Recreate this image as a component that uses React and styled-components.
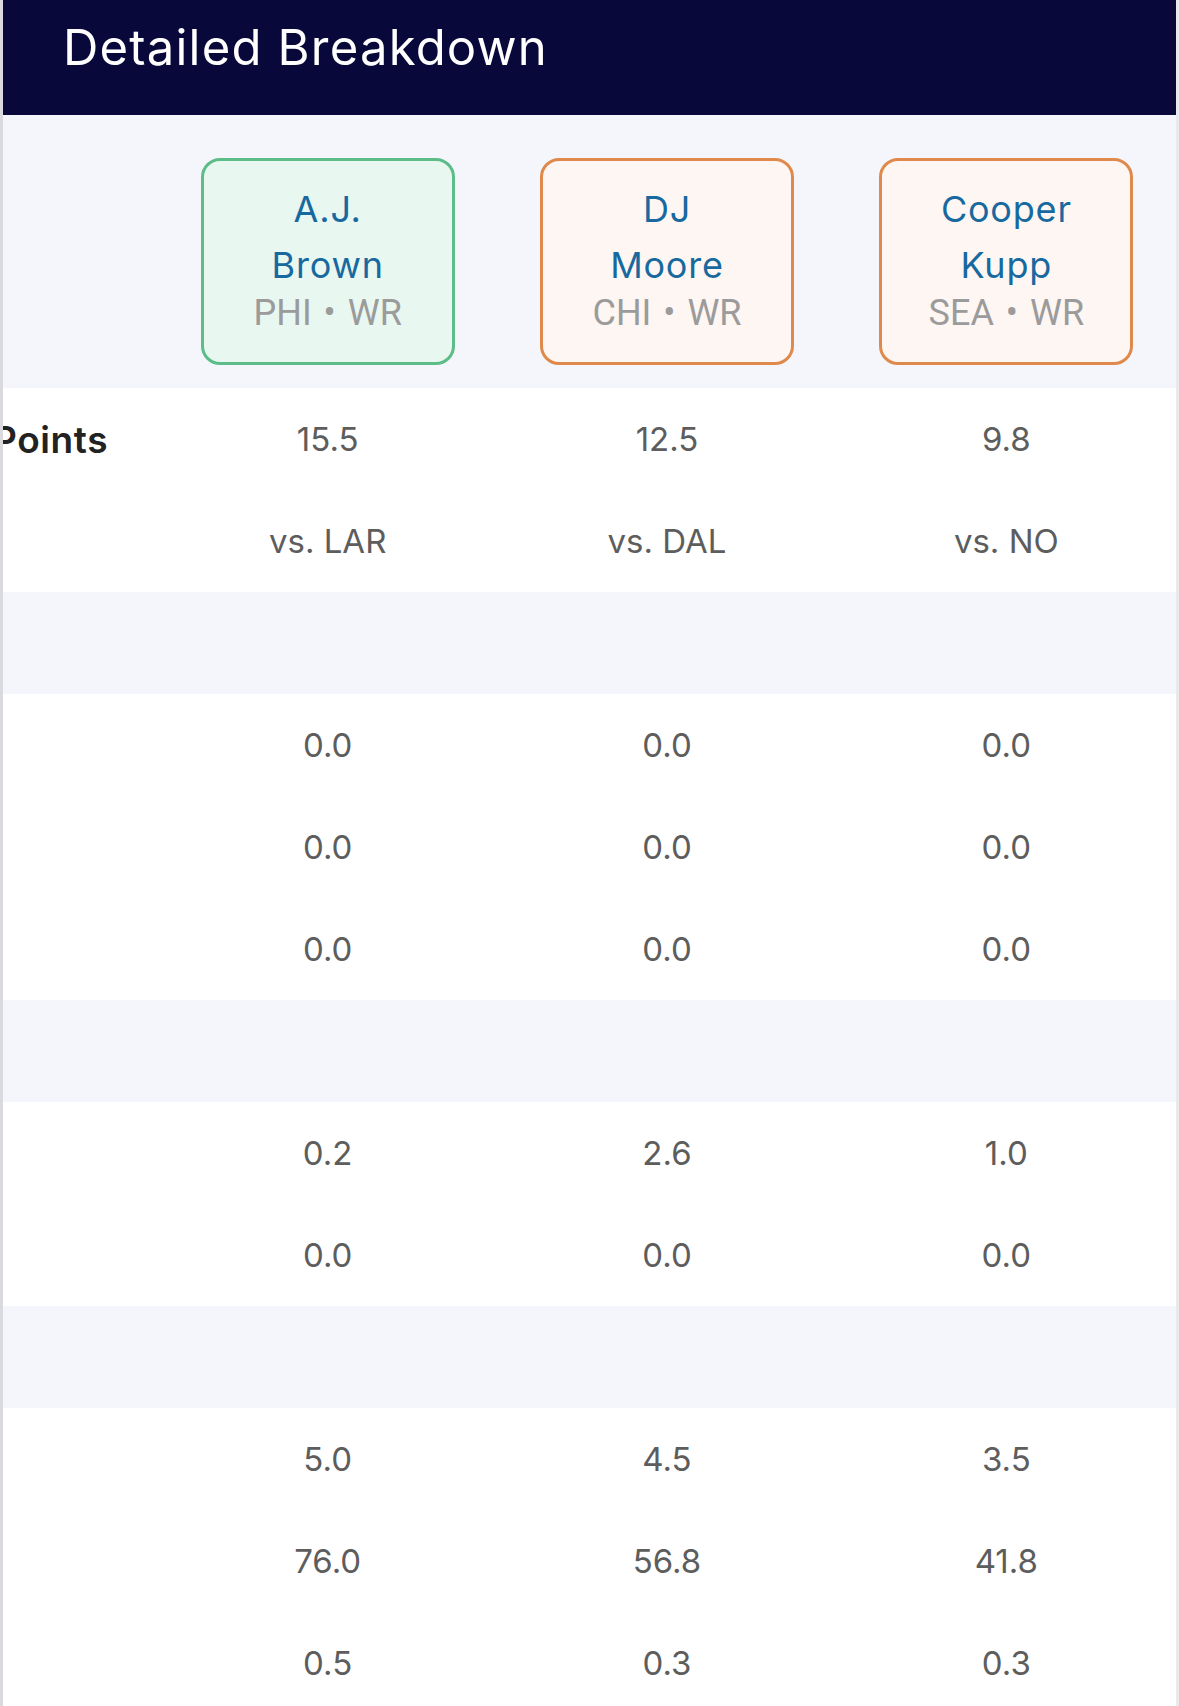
import React from "react";
import styled, { createGlobalStyle } from "styled-components";

const GlobalStyle = createGlobalStyle`
  * {
    box-sizing: border-box;
  }
  body {
    margin: 0;
    background: #ffffff;
    font-family: "Inter", "Noto Sans", sans-serif;
  }
`;

const Page = styled.div`
  width: 1179px;
  min-height: 1706px;
  border-left: 3px solid #d9d9de;
  border-right: 3px solid #e9e9ee;
  background: #ffffff;
  overflow: hidden;
  box-shadow: inset 12px 0 10px -10px rgba(0, 0, 0, 0.08);
`;

const Header = styled.div`
  height: 115px;
  background: #08093a;
  display: flex;
  align-items: center;
  padding: 0 0 20px 60px;
`;

const Title = styled.h1`
  margin: 0;
  color: #ffffff;
  font-size: 49px;
  font-weight: 400;
  letter-spacing: 1.2px;
`;

const Grid = styled.div`
  display: grid;
  grid-template-columns: 155px repeat(3, 1fr);
  align-items: center;
  background: ${(p) => (p.$shade ? "#f5f6fb" : "#ffffff")};
  height: ${(p) => p.$height || 102}px;
`;

const CardCell = styled.div`
  display: flex;
  justify-content: center;
  align-self: start;
  padding-top: 43px;
`;

const Card = styled.div`
  width: 254px;
  height: 207px;
  border-radius: 19px;
  border: 3px solid ${(p) => (p.$best ? "#5cbd88" : "#df8a4c")};
  background: ${(p) => (p.$best ? "#e8f7f0" : "#fef6f2")};
  display: flex;
  flex-direction: column;
  align-items: center;
  padding-top: 20px;
`;

const Name = styled.div`
  color: #17699f;
  font-size: 36px;
  letter-spacing: 0.8px;
  line-height: 56px;
  text-align: center;
`;

const Team = styled.div`
  color: #9b9b9b;
  font-family: "Roboto", sans-serif;
  font-size: 36px;
  line-height: 40px;
  word-spacing: 3px;
`;

const Label = styled.div`
  margin-left: -10px;
  font-size: 37px;
  font-weight: 600;
  letter-spacing: 0.6px;
  color: #222222;
  white-space: nowrap;
`;

const Value = styled.div`
  text-align: center;
  font-size: 33px;
  color: #5d5d5d;
`;

const players = [
  { first: "A.J.", last: "Brown", team: "PHI", pos: "WR", best: true },
  { first: "DJ", last: "Moore", team: "CHI", pos: "WR" },
  { first: "Cooper", last: "Kupp", team: "SEA", pos: "WR" },
];

const rows = [
  { label: "Points", values: ["15.5", "12.5", "9.8"] },
  { values: ["vs. LAR", "vs. DAL", "vs. NO"] },
  { section: true },
  { values: ["0.0", "0.0", "0.0"] },
  { values: ["0.0", "0.0", "0.0"] },
  { values: ["0.0", "0.0", "0.0"] },
  { section: true },
  { values: ["0.2", "2.6", "1.0"] },
  { values: ["0.0", "0.0", "0.0"] },
  { section: true },
  { values: ["5.0", "4.5", "3.5"] },
  { values: ["76.0", "56.8", "41.8"] },
  { values: ["0.5", "0.3", "0.3"] },
  { values: ["", "", ""] },
];

export default function App() {
  return (
    <Page>
      <GlobalStyle />
      <Header>
        <Title>Detailed Breakdown</Title>
      </Header>
      <Grid $shade $height={273}>
        <div />
        {players.map((p) => (
          <CardCell key={p.last}>
            <Card $best={p.best}>
              <Name>{p.first}</Name>
              <Name>{p.last}</Name>
              <Team>
                {p.team} • {p.pos}
              </Team>
            </Card>
          </CardCell>
        ))}
      </Grid>
      {rows.map((r, i) =>
        r.section ? (
          <Grid key={i} $shade />
        ) : (
          <Grid key={i}>
            <Label>{r.label}</Label>
            {r.values.map((v, j) => (
              <Value key={j}>{v}</Value>
            ))}
          </Grid>
        )
      )}
    </Page>
  );
}
